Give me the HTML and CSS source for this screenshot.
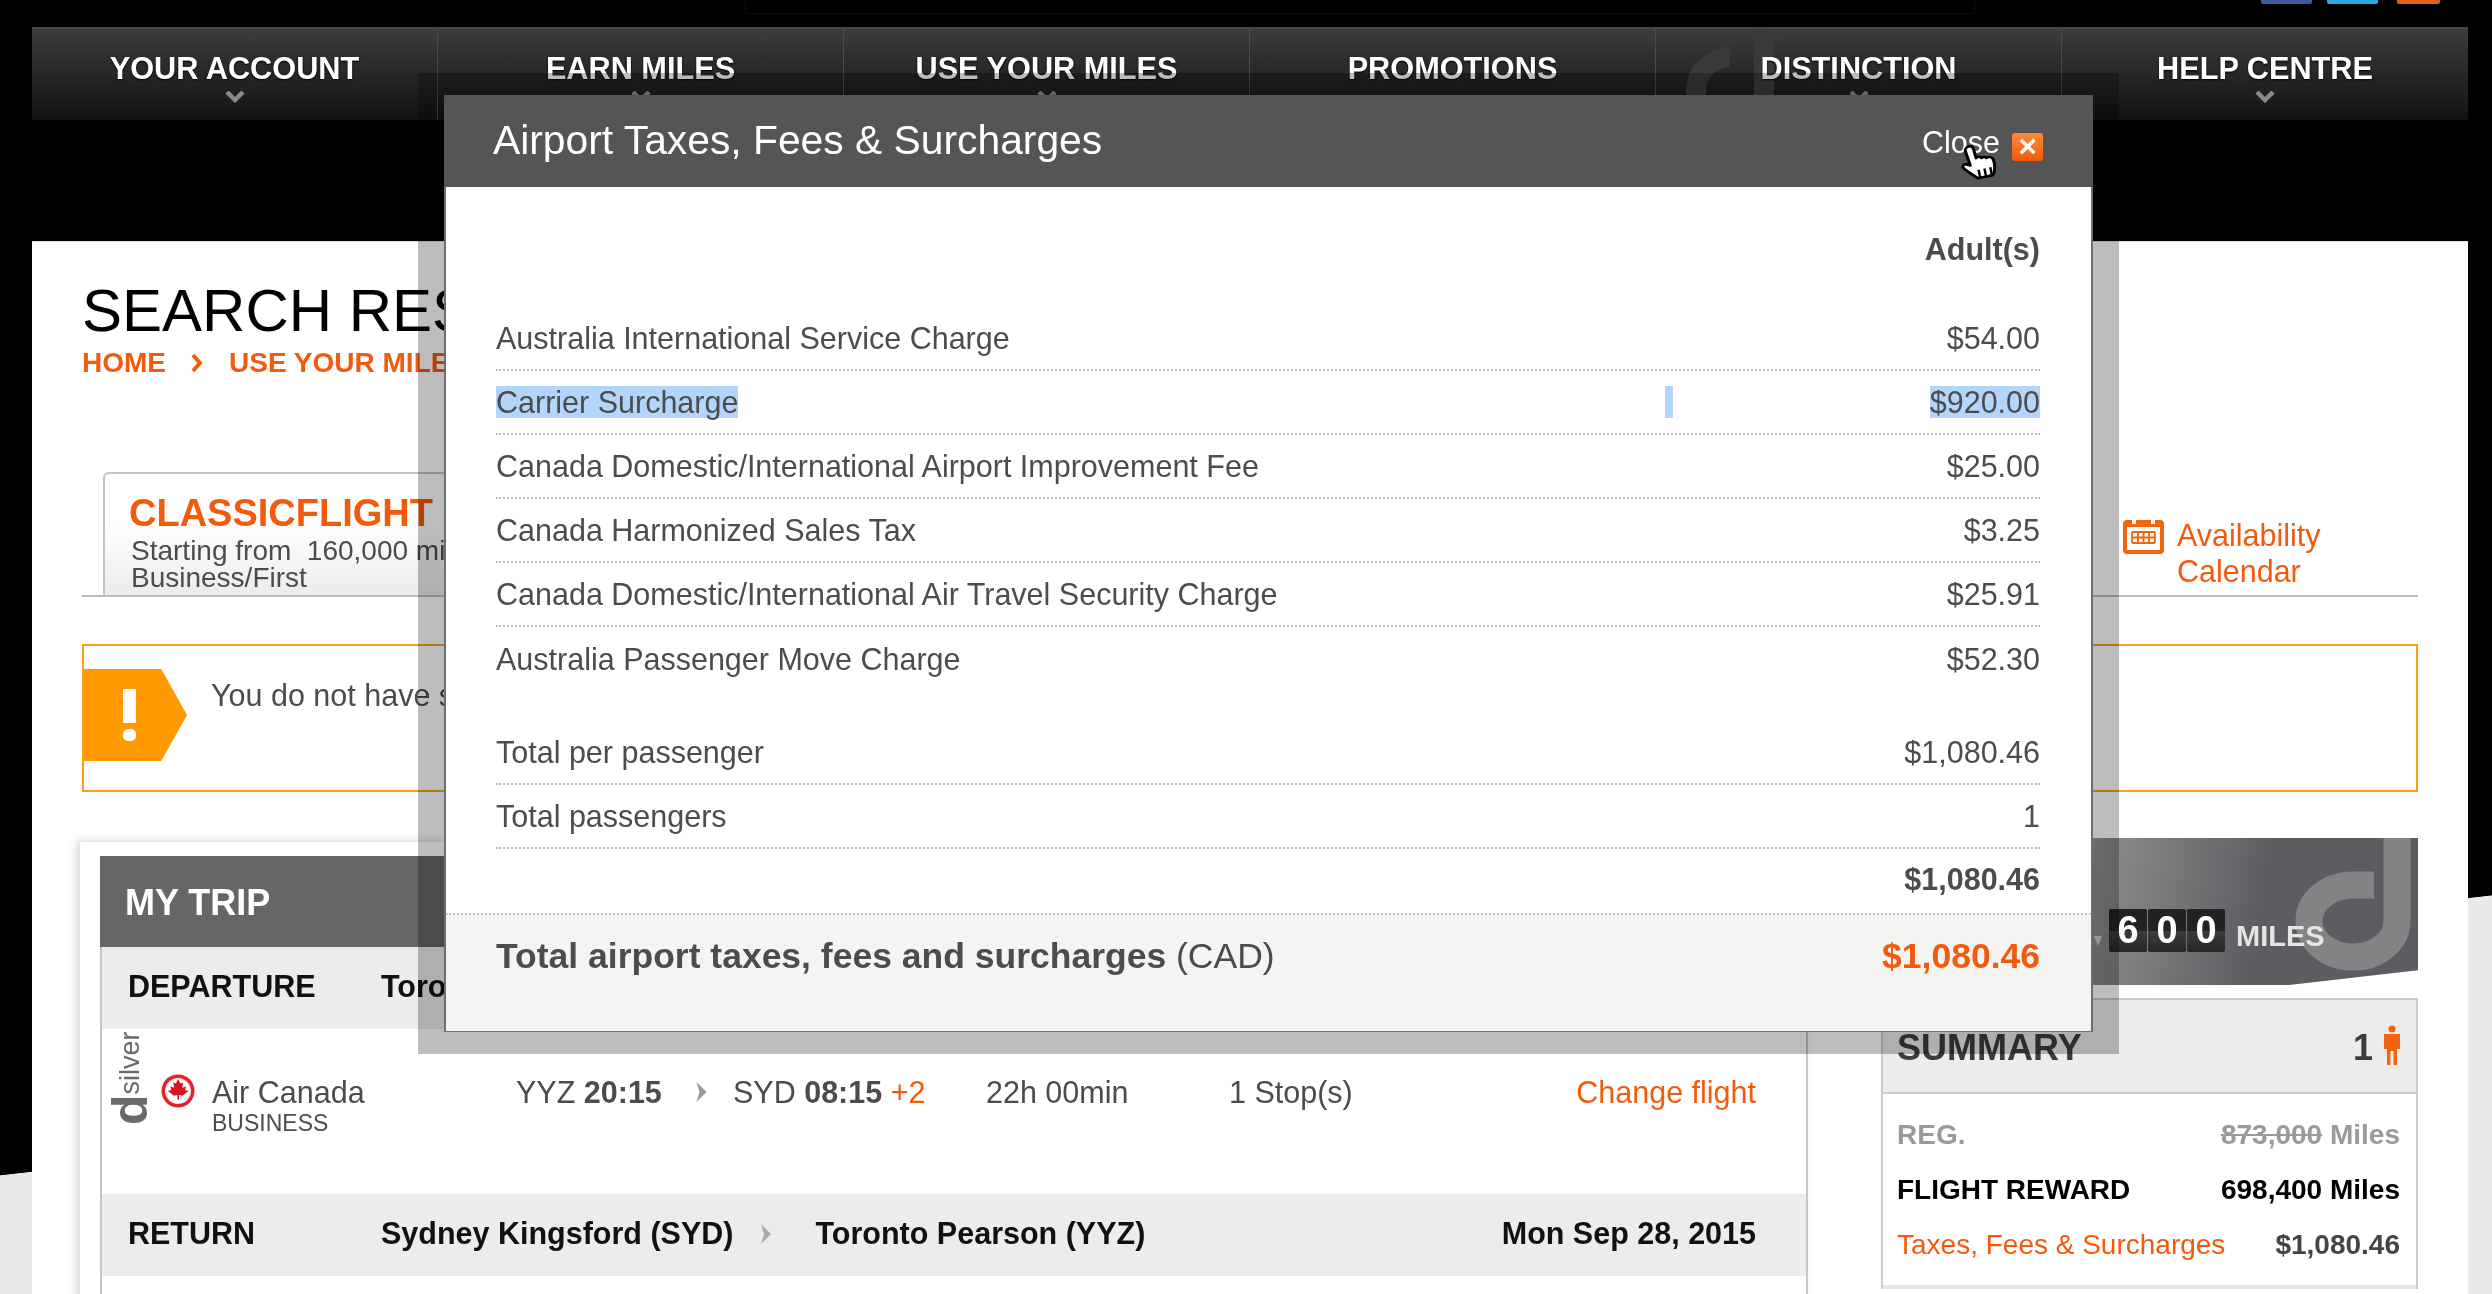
FILE: index.html
```html
<!DOCTYPE html>
<html lang="en">
<head>
<meta charset="utf-8">
<title>Search Results</title>
<link rel="stylesheet" href="styles.css">
</head>
<body>
<div class="page">
  <div class="top">
    <span class="searchbox"></span>
    <span class="social s-fb"></span><span class="social s-tw"></span><span class="social s-rss"></span>
  </div>
  <nav class="nav">
    <div class="nav-item">YOUR ACCOUNT<svg class="chev" viewBox="0 0 20 12"><path d="M2 1l8 8 8-8" fill="none" stroke="#8a8a8a" stroke-width="4.5"/></svg></div>
    <div class="nav-item">EARN MILES<svg class="chev" viewBox="0 0 20 12"><path d="M2 1l8 8 8-8" fill="none" stroke="#8a8a8a" stroke-width="4.5"/></svg></div>
    <div class="nav-item">USE YOUR MILES<svg class="chev" viewBox="0 0 20 12"><path d="M2 1l8 8 8-8" fill="none" stroke="#8a8a8a" stroke-width="4.5"/></svg></div>
    <div class="nav-item">PROMOTIONS</div>
    <div class="nav-item nav-d">
      <svg class="nav-logo" viewBox="0 0 110 93"><path d="M78 0V62A34 34 0 1 1 44 28" fill="none" stroke="#3a3a3a" stroke-width="20"/></svg>
      <span class="nav-label">DISTINCTION</span><svg class="chev" viewBox="0 0 20 12"><path d="M2 1l8 8 8-8" fill="none" stroke="#8a8a8a" stroke-width="4.5"/></svg>
    </div>
    <div class="nav-item">HELP CENTRE<svg class="chev" viewBox="0 0 20 12"><path d="M2 1l8 8 8-8" fill="none" stroke="#8a8a8a" stroke-width="4.5"/></svg></div>
  </nav>

  <main class="sheet">
    <h1 class="title">SEARCH RESULTS</h1>
    <div class="crumbs"><span>HOME</span><svg class="crumb-arrow" viewBox="0 0 12 20"><path d="M2 2l7 8-7 8" fill="none" stroke="#f25a0c" stroke-width="4"/></svg><span>USE YOUR MILES</span></div>

    <div class="tabs">
      <div class="tab">
        <div class="tab-name">CLASSICFLIGHT</div>
        <div class="tab-line">Starting from&nbsp; 160,000 miles</div>
        <div class="tab-line">Business/First</div>
      </div>
      <div class="cal">
        <svg class="cal-icon" viewBox="0 0 41 37"><rect x="0" y="3" width="41" height="34" rx="4" fill="#f2640f"/><rect x="4" y="10" width="33" height="23" fill="#fff"/><rect x="9" y="0" width="4" height="7" fill="#fff"/><rect x="28" y="0" width="4" height="7" fill="#fff"/><path d="M9 15h23M9 20.5h23M9 26h23M9 15v11M15 15v11M20.5 15v11M26 15v11M32 15v11" stroke="#f2640f" stroke-width="1.8"/></svg>
        <span class="cal-text">Availability<br>Calendar</span>
      </div>
    </div>

    <div class="alert">
      <div class="alert-flag"><span class="bang"></span><span class="bang-dot"></span></div>
      <div class="alert-text">You do not have sufficient miles for this reward</div>
    </div>

    <div class="columns">
      <section class="trip">
        <div class="trip-head">MY TRIP</div>
        <div class="leg-head">
          <span class="leg-label">DEPARTURE</span>
          <span class="leg-from">Toronto Pearson (YYZ)</span>
          <span class="leg-date">Sat Sep 12, 2015</span>
        </div>
        <div class="flight">
          <div class="dsilver"><span class="ds-d">d</span>silver</div>
          <svg class="roundel" viewBox="0 0 34 34"><circle cx="17" cy="17" r="16.5" fill="#e4202a"/><circle cx="17" cy="17" r="13" fill="#fbe3e3"/><circle cx="17" cy="17" r="11.5" fill="#fff"/><path d="M17 5l2.4 4.6 2.8-1.200-1 5.400 3.800-1.400-.8 3.600 3.300 1-6 4.700-3.500-.8v4.600h-1.600v-4.600l-3.500.8-6-4.700 3.300-1-.8-3.600 3.800 1.400-1-5.400 2.800 1.200z" fill="#d8121f"/></svg>
          <div class="carrier"><div class="carrier-name">Air Canada</div><div class="carrier-class">BUSINESS</div></div>
          <div class="f-dep">YYZ <b>20:15</b></div>
          <svg class="f-arrow" viewBox="0 0 12 20"><path d="M1 0l10 10-10 10 3-10z" fill="#999"/></svg>
          <div class="f-arr">SYD <b>08:15</b> <span class="orange">+2</span></div>
          <div class="f-dur">22h 00min</div>
          <div class="f-stops">1 Stop(s)</div>
          <div class="f-change orange">Change flight</div>
        </div>
        <div class="leg-head">
          <span class="leg-label">RETURN</span>
          <span class="leg-from">Sydney Kingsford (SYD)</span>
          <svg class="leg-arrow" viewBox="0 0 12 20"><path d="M1 0l10 10-10 10 3-10z" fill="#aaa"/></svg>
          <span class="leg-to">Toronto Pearson (YYZ)</span>
          <span class="leg-date">Mon Sep 28, 2015</span>
        </div>
        <div class="flight-stub"><div class="dsilver stub">silver</div></div>
      </section>

      <aside class="side">
        <div class="banner">
          <svg class="banner-logo" viewBox="0 0 150 147"><path d="M129 0V83A44 36 0 1 1 85 47H106" fill="none" stroke="#838385" stroke-width="27"/></svg>
          <div class="tiles"><span class="comma"></span><span class="tile">6</span><span class="tile">0</span><span class="tile">0</span><span class="miles">MILES</span></div>
        </div>
        <div class="summary">
          <div class="sum-head"><span class="sum-title">SUMMARY</span><span class="sum-count">1<svg class="person" viewBox="0 0 18 40"><circle cx="9" cy="4" r="3.5" fill="#f2640f"/><path d="M1 9h16v15h-3v16h-3.5V26h-3v14H4V24H1z" fill="#f2640f"/></svg></span></div>
          <div class="sum-body">
            <div class="sum-row muted"><span>REG.</span><span><s>873,000</s> Miles</span></div>
            <div class="sum-row strong"><span>FLIGHT REWARD</span><span>698,400 Miles</span></div>
            <div class="sum-row"><span class="orange">Taxes, Fees &amp; Surcharges</span><span class="amt">$1,080.46</span></div>
          </div>
        </div>
      </aside>
    </div>
  </main>

  <div class="overlay">
    <div class="modal">
      <div class="modal-head">
        <span class="modal-title">Airport Taxes, Fees &amp; Surcharges</span>
        <span class="modal-close">Close<span class="close-x">×</span></span>
        <svg class="cursor" viewBox="0 0 40 44" preserveAspectRatio="none"><path d="M12 3c2.5 0 3.500 2 3.500 4l.5 9c2-1.500 4-.5 4.500 1 1.500-1 3.500-.5 4 1 1.500-1 4.500-.5 5 2 .5 1 .5 2 .5 4 0 4-1 9-3 12H14c-2-3-8-9-10-13-1-2 1-4 3-3l3 2-1.500-15C8.500 5 10 3 12 3z" fill="#fff" stroke="#000" stroke-width="2.5" stroke-linejoin="round"/><path d="M16 28v9M21 28v9M26 28v9" stroke="#000" stroke-width="2"/></svg>
      </div>
      <div class="modal-body">
        <div class="m-head">Adult(s)</div>
        <div class="m-row"><span>Australia International Service Charge</span><span>$54.00</span></div>
        <div class="m-row m-sel"><span class="sel">Carrier Surcharge</span><span class="sel sel-gap"></span><span class="sel">$920.00</span></div>
        <div class="m-row"><span>Canada Domestic/International Airport Improvement Fee</span><span>$25.00</span></div>
        <div class="m-row"><span>Canada Harmonized Sales Tax</span><span>$3.25</span></div>
        <div class="m-row"><span>Canada Domestic/International Air Travel Security Charge</span><span>$25.91</span></div>
        <div class="m-row m-last"><span>Australia Passenger Move Charge</span><span>$52.30</span></div>
        <div class="m-row"><span>Total per passenger</span><span>$1,080.46</span></div>
        <div class="m-row"><span>Total passengers</span><span>1</span></div>
        <div class="m-row m-total"><span></span><span>$1,080.46</span></div>
      </div>
      <div class="modal-foot">
        <span class="foot-label"><b>Total airport taxes, fees and surcharges</b> (CAD)</span>
        <span class="foot-amt">$1,080.46</span>
      </div>
    </div>
  </div>
</div>
</body>
</html>
```
FILE: styles.css
```css
* { box-sizing: border-box; }
html, body { margin: 0; height: 100%; }
body {
  overflow: hidden;
  font-family: "Liberation Sans", Arial, sans-serif;
  color: #4c4c4c;
  background: #000;
}
.page {
  position: relative;
  width: 2492px;
  height: 1294px;
  overflow: hidden;
  display: flex;
  flex-direction: column;
  background: linear-gradient(173.59deg, #000 74.65%, #e9e9e9 74.7%);
  filter: blur(0.55px);
}
.orange { color: #f25a0c; }

/* top strip */
.top { height: 27px; display: flex; align-items: flex-start; padding-right: 52px; flex: none; }
.searchbox { width: 1230px; height: 14px; margin-left: 745px; margin-right: auto; border: 1px solid #0c0c0c; border-top: 0; }
.social { height: 4px; border-radius: 0 0 2px 2px; }
.s-fb { width: 51px; background: #3b5a99; margin-right: 15px; }
.s-tw { width: 51px; background: #29a9e1; margin-right: 19px; }
.s-rss { width: 43px; background: #e0601c; }

/* nav */
.nav {
  flex: none;
  height: 93px;
  margin: 0 24px 0 32px;
  display: grid;
  grid-template-columns: repeat(6, 1fr);
  background: linear-gradient(#3c3c3c, #121212);
  border-top: 2px solid #454545;
}
.nav-item {
  position: relative;
  display: flex;
  flex-direction: column;
  align-items: center;
  padding-top: 22px;
  color: #fff;
  font-weight: 700;
  font-size: 30.7px;
  line-height: 36px;
  text-shadow: 0 1px 2px #000;
  border-right: 1px solid #4a4a4a;
  overflow: hidden;
}
.nav-item:last-child { border-right: 0; }
.chev { width: 20px; height: 12px; margin-top: 4px; }
.nav-logo { position: absolute; left: 30px; top: 0; width: 110px; height: 93px; }
.nav-label { position: relative; }
.nav-d .chev { position: relative; }

/* sheet */
.sheet {
  flex: 1;
  margin: 121px 24px 0 32px;
  padding: 0 50px;
  background: #fff;
  border-top: 1px solid #ddd;
  min-height: 0;
  overflow: hidden;
}
.title {
  margin: 36px 0 0;
  font-size: 60px;
  line-height: 66px;
  font-weight: 400;
  color: #000;
}
.crumbs {
  display: flex;
  align-items: center;
  margin-top: 2px;
  color: #f25a0c;
  font-size: 28px;
  line-height: 34px;
  font-weight: 700;
}
.crumb-arrow { width: 12px; height: 20px; margin: 0 26px 0 25px; }

.tabs {
  display: flex;
  justify-content: space-between;
  height: 125px;
  margin-top: 92px;
  padding-left: 21px;
  border-bottom: 2px solid #bdbdbd;
}
.tab {
  width: 560px;
  padding: 18px 0 0 24px;
  border: 2px solid #c4c4c4;
  border-bottom: 0;
  border-radius: 6px 6px 0 0;
  background: linear-gradient(#fff 40%, #ececec);
}
.tab-name { color: #f25a0c; font-size: 38px; line-height: 42px; font-weight: 700; }
.tab-line { font-size: 28px; line-height: 27px; padding-left: 2px; }
.tab-line:nth-child(2) { margin-top: 3px; }
.cal { display: flex; align-items: flex-start; width: 295px; padding-top: 45px; color: #f25a0c; }
.cal-icon { width: 41px; height: 37px; margin-right: 13px; flex: none; }
.cal-text { display: block; font-size: 30.5px; line-height: 36px; }

.alert {
  display: flex;
  height: 148px;
  margin-top: 47px;
  padding-top: 23px;
  border: 2px solid #f7a11a;
}
.alert-flag {
  position: relative;
  flex: none;
  width: 103px;
  height: 92px;
  background: #ff9a00;
  clip-path: polygon(0 0, 75% 0, 100% 50%, 75% 100%, 0 100%);
}
.bang { position: absolute; left: 39px; top: 20px; width: 13px; height: 34px; background: #fff; }
.bang-dot { position: absolute; left: 39px; top: 60px; width: 13px; height: 12px; border-radius: 5px; background: #fff; }
.alert-text { margin: 9px 0 0 24px; font-size: 30.5px; line-height: 34px; }

.columns { display: flex; justify-content: space-between; align-items: flex-start; margin-top: 46px; margin-left: -2px; }

/* trip card */
.trip {
  width: 1728px;
  flex: none;
  margin-top: 4px;
  padding: 14px 0 0 20px;
  background: #fff;
  box-shadow: -4px -2px 8px rgba(0, 0, 0, .14);
}
.trip-head {
  height: 91px;
  padding: 2px 0 0 25px;
  background: #666;
  color: #fff;
  font-size: 36px;
  line-height: 89px;
  font-weight: 700;
}
.leg-head {
  display: flex;
  align-items: center;
  height: 82px;
  padding: 0 50px 3px 26px;
  background: #ececec;
  border-left: 2px solid #c6c6c6;
  border-right: 2px solid #c6c6c6;
  color: #111;
  font-size: 30.5px;
  font-weight: 700;
}
.leg-label { width: 253px; }
.leg-arrow { width: 12px; height: 20px; margin: 0 43px 0 27px; flex: none; }
.leg-date { margin-left: auto; }
.flight {
  position: relative;
  display: flex;
  align-items: center;
  height: 165px;
  padding: 0 50px 39px 0;
  background: #fff;
  border-left: 2px solid #c6c6c6;
  border-right: 2px solid #c6c6c6;
  font-size: 30.5px;
}
.dsilver {
  flex: none;
  width: 40px;
  margin-left: 9px;
  align-self: flex-start;
  margin-top: 4px;
  height: 92px;
  writing-mode: vertical-rl;
  transform: rotate(180deg);
  font-size: 27px;
  line-height: 38px;
  color: #6a6a6a;
}
.ds-d { font-size: 50px; font-weight: 700; }
.roundel { width: 34px; height: 34px; margin: -2px 0 0 10px; flex: none; }
.carrier { width: 304px; margin-left: 17px; margin-top: 28px; }
.carrier-name { line-height: 34px; }
.carrier-class { font-size: 23px; line-height: 29px; }
.f-dep { width: 179px; }
.f-arrow { width: 13px; height: 20px; flex: none; margin-right: 25px; }
.f-arr { width: 253px; }
.f-dur { width: 243px; }
.f-stops { width: 200px; }
.f-change { margin-left: auto; }
.flight-stub {
  height: 96px;
  border-left: 2px solid #c6c6c6;
  border-right: 2px solid #c6c6c6;
}
.stub { margin-top: 0; }

/* side */
.side { width: 537px; flex: none; }
.banner {
  position: relative;
  height: 147px;
  background: linear-gradient(100deg, #55565a, #8f8f8f 38%, #5c5d61 70%, #5c5d61);
  clip-path: polygon(0 0, 100% 0, 100% 90%, 76% 100%, 0 100%);
  overflow: hidden;
}
.banner-logo { position: absolute; right: 0; top: 0; width: 150px; height: 147px; }
.tiles { position: absolute; left: 213px; top: 70px; display: flex; align-items: center; }
.comma { width: 0; height: 0; margin: 20px 7px 0 0; border-left: 4px solid transparent; border-right: 4px solid transparent; border-top: 10px solid #ccc; }
.tile {
  width: 38px;
  height: 43px;
  margin-right: 1px;
  background: linear-gradient(#222, #222 50%, #3c3c3c 52%, #262626);
  color: #fff;
  border-radius: 2px;
  text-align: center;
  font-size: 38px;
  font-weight: 700;
  line-height: 42px;
}
.miles { margin: 12px 0 0 10px; color: #ececec; font-size: 29px; font-weight: 700; opacity: .95; }
.summary {
  margin-top: 13px;
  border: 2px solid #ccc;
  border-bottom: 0;
}
.sum-head {
  display: flex;
  align-items: flex-end;
  justify-content: space-between;
  height: 94px;
  padding: 0 15px 26px 14px;
  background: #ececec;
  border-bottom: 2px solid #ccc;
  color: #3c3c3c;
  font-size: 36px;
  line-height: 36px;
  font-weight: 700;
}
.sum-count { display: flex; align-items: flex-end; gap: 10px; }
.person { width: 18px; height: 40px; margin-bottom: 1px; }
.sum-body { padding: 24px 16px 0 14px; height: 195px; border-bottom: 4px solid #e6e6e6; }
.sum-row { display: flex; justify-content: space-between; height: 55px; font-size: 28px; line-height: 34px; }
.muted { color: #9a9a9a; font-weight: 700; }
.strong { color: #000; font-weight: 700; }
.amt { font-weight: 700; color: #444; }

/* modal */
.overlay {
  position: absolute;
  left: 418px;
  top: 73px;
  width: 1701px;
  height: 981px;
  padding: 22px 0 0 26px;
  background: rgba(0, 0, 0, .26);
}
.modal {
  width: 1649px;
  height: 937px;
  background: #fff;
  border: 2px solid #6e6e6e;
  border-top: 0;
  display: flex;
  flex-direction: column;
}
.modal-head {
  position: relative;
  flex: none;
  display: flex;
  align-items: center;
  justify-content: space-between;
  height: 92px;
  margin: 0 -2px;
  padding: 0 49px 0 49px;
  background: #555;
  color: #fff;
}
.modal-title { font-size: 40.8px; margin-top: -2px; }
.modal-close { display: flex; align-items: center; font-size: 30.5px; margin-top: 3px; }
.close-x {
  width: 31px;
  height: 28px;
  margin: 8px 1px 0 12px;
  border-radius: 3px;
  background: linear-gradient(#ff8a3a, #f25a0c);
  text-align: center;
  font-size: 32px;
  font-weight: 700;
  line-height: 27px;
}
.cursor { position: absolute; left: 1514px; top: 46px; width: 48px; height: 44px; transform: rotate(-12deg); }
.modal-body { flex: 1; padding: 0 51px 0 50px; font-size: 30.5px; }
.m-head { height: 120px; padding-top: 44px; text-align: right; font-weight: 700; line-height: 36px; }
.m-row {
  display: flex;
  justify-content: space-between;
  align-items: center;
  height: 64px;
  border-bottom: 2px dotted #bdbdbd;
  line-height: 32px;
}
.m-sel { position: relative; }
.sel { background: #b4d5fb; }
.sel-gap { position: absolute; left: 1169px; width: 8px; height: 32px; }
.m-last { border-bottom: 0; margin-bottom: 30px; }
.m-total { height: 64px; border-bottom: 0; font-weight: 700; padding-bottom: 4px; }
.modal-foot {
  flex: none;
  display: flex;
  justify-content: space-between;
  height: 118px;
  padding: 22px 51px 0 50px;
  background: #f4f4f2;
  border-top: 2px dotted #c8c8c8;
  font-size: 35.5px;
  line-height: 38px;
}
.foot-amt { color: #f25a0c; font-weight: 700; }
```
